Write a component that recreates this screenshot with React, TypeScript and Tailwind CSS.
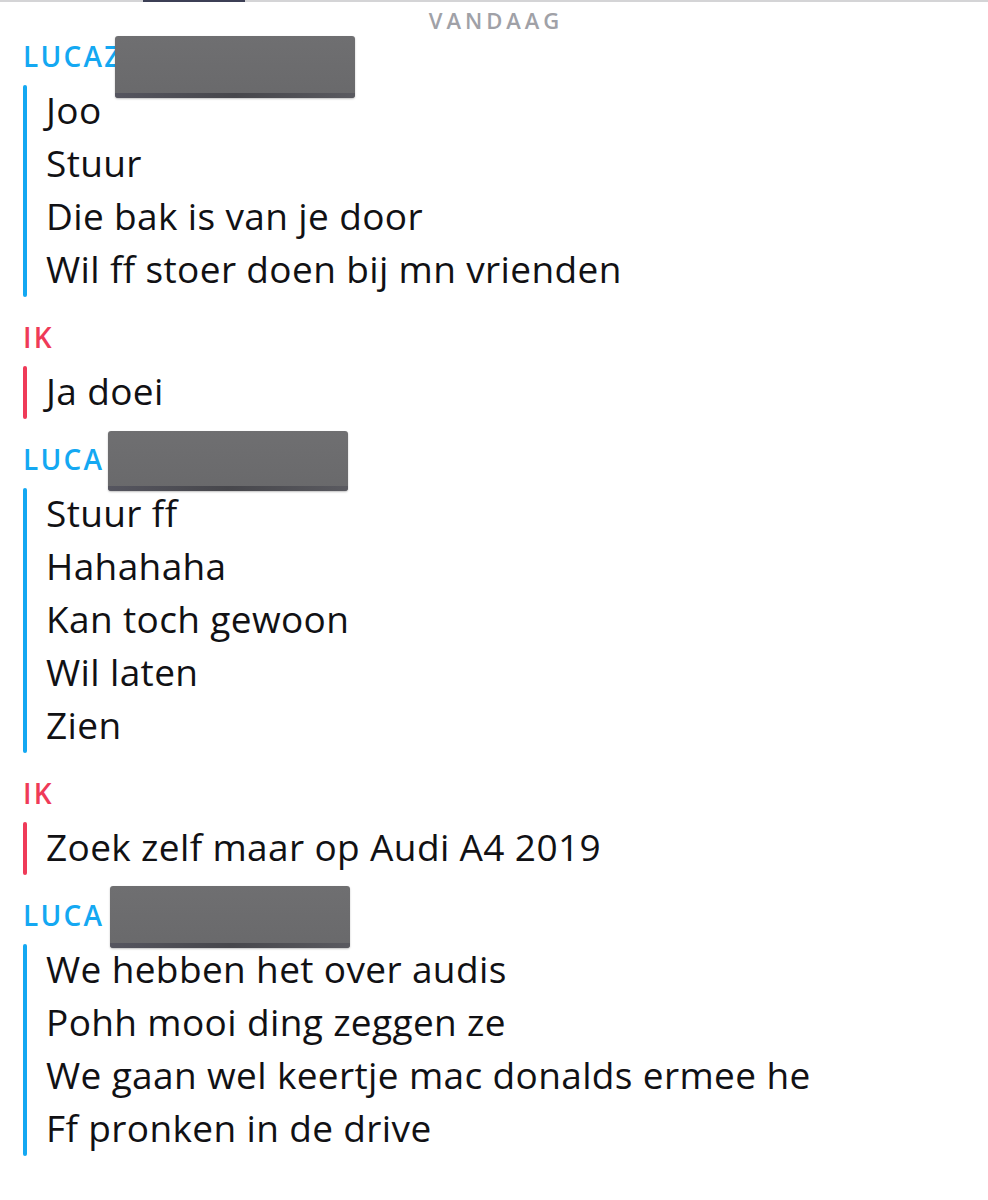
import React from "react";

type Group = { who: "luca" | "ik"; name: string; box?: { left: number; top: number; width: number; height: number }; lines: string[] };

const groups: Group[] = [
  { who: "luca", name: "LUCAZ", box: { left: 92, top: -6, width: 240, height: 62 }, lines: ["Joo", "Stuur", "Die bak is van je door", "Wil ff stoer doen bij mn vrienden"] },
  { who: "ik", name: "IK", lines: ["Ja doei"] },
  { who: "luca", name: "LUCA", box: { left: 85, top: -14, width: 240, height: 60 }, lines: ["Stuur ff", "Hahahaha", "Kan toch gewoon", "Wil laten", "Zien"] },
  { who: "ik", name: "IK", lines: ["Zoek zelf maar op Audi A4 2019"] },
  { who: "luca", name: "LUCA", box: { left: 87, top: -15, width: 240, height: 62 }, lines: ["We hebben het over audis", "Pohh mooi ding zeggen ze", "We gaan wel keertje mac donalds ermee he", "Ff pronken in de drive"] },
];

function Redaction({ box }: { box: NonNullable<Group["box"]> }) {
  return (
    <div
      className="absolute rounded-[3px] overflow-hidden shadow-[0_1px_2px_rgba(0,0,0,0.25)]"
      style={{ left: box.left, top: box.top, width: box.width, height: box.height }}
    >
      <div className="w-full h-full flex flex-col bg-gradient-to-b from-[#6f6f71] to-[#69696b]">
        <div className="flex-1" />
        <div className="h-[5px] bg-gradient-to-r from-[#55555f] via-[#47474c] to-[#5a5a60]" />
      </div>
    </div>
  );
}

export default function App() {
  return (
    <div className="w-[988px] h-[1200px] bg-white relative overflow-hidden" style={{ fontFamily: "'Open Sans', 'Noto Sans', sans-serif" }}>
      <div className="h-[2px] bg-[#d4d4d6] relative">
        <div className="absolute left-[143px] w-[102px] top-0 h-[2px] bg-[#3c3f55]" />
      </div>
      <div className="h-[36px] flex items-center justify-center pl-[4px] text-[22px] font-semibold tracking-[0.18em] text-[#a0a1a7]">
        VANDAAG
      </div>
      <div className="pt-[4px] px-[23px] flex flex-col gap-[26px]">
        {groups.map((g, i) => {
          const color = g.who === "luca" ? "text-[#14a8f2]" : "text-[#ef3a58]";
          const bar = g.who === "luca" ? "bg-[#14a8f2]" : "bg-[#ef3a58]";
          return (
            <div key={i} className="flex flex-col gap-[15px]">
              <div className={`relative h-[28px] leading-[28px] text-[28px] font-semibold tracking-[0.08em] ${color}`}>
                {g.name}
                {g.box && <Redaction box={g.box} />}
              </div>
              <div className="flex">
                <div className={`w-[4px] rounded-full ${bar}`} />
                <div className="pl-[19px] flex flex-col">
                  {g.lines.map((l, j) => (
                    <div key={j} className="h-[53px] leading-[49px] text-[37px] tracking-[0.01em] text-[#111114] whitespace-nowrap">
                      {l}
                    </div>
                  ))}
                </div>
              </div>
            </div>
          );
        })}
      </div>
    </div>
  );
}
